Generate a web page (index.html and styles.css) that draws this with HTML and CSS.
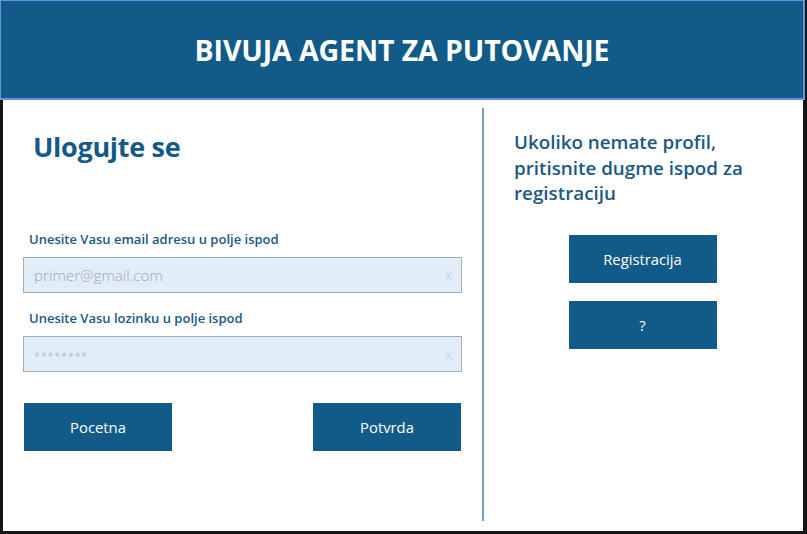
FILE: index.html
```html
<!DOCTYPE html>
<html lang="sr">
<head>
<meta charset="utf-8">
<title>Bivuja agent za putovanje</title>
<link rel="stylesheet" href="styles.css">
</head>
<body>
<header class="header">
  <h1 class="header-title">BIVUJA AGENT ZA PUTOVANJE</h1>
</header>
<main class="main">
  <section class="login">
    <h2 class="login-title">Ulogujte se</h2>
    <label class="field-label label-email">Unesite Vasu email adresu u polje ispod</label>
    <div class="field">
      <input class="field-input" type="text" placeholder="primer@gmail.com">
      <span class="field-clear">X</span>
    </div>
    <label class="field-label label-pass">Unesite Vasu lozinku u polje ispod</label>
    <div class="field">
      <input class="field-input field-pass" type="text" placeholder="********">
      <span class="field-clear">X</span>
    </div>
    <div class="actions">
      <button class="btn">Pocetna</button>
      <button class="btn">Potvrda</button>
    </div>
  </section>
  <div class="divider"></div>
  <section class="register">
    <p class="register-text">Ukoliko nemate profil, pritisnite dugme ispod za registraciju</p>
    <button class="btn btn-reg">Registracija</button>
    <button class="btn btn-help">?</button>
  </section>
</main>
</body>
</html>
```

FILE: styles.css
```css
* { box-sizing: border-box; }

html, body {
  margin: 0;
  padding: 0;
}

body {
  width: 807px;
  height: 534px;
  background: #151515;
  font-family: "Open Sans", "Noto Sans", sans-serif;
  overflow: hidden;
}

.header {
  width: 805px;
  height: 100px;
  background: #125a87;
  border-left: 1px solid #6692e6;
  border-top: 1px solid #6692e6;
  border-right: 2px solid #6692e6;
  border-bottom: 2px solid #6692e6;
  display: flex;
  align-items: center;
  justify-content: center;
}

.header-title {
  margin: 0;
  color: #ffffff;
  font-size: 28.5px;
  font-weight: 700;
  letter-spacing: -0.1px;
  line-height: 1;
  padding-top: 2px;
}

.main {
  margin-left: 3px;
  width: 800px;
  height: 431px;
  background: #ffffff;
  display: grid;
  grid-template-columns: 479px 2px 1fr;
}

.login {
  display: flex;
  flex-direction: column;
  align-items: flex-start;
  padding-left: 20px;
  padding-top: 30px;
}

.login-title {
  margin: 0 0 0 10px;
  color: #135a87;
  font-size: 27px;
  font-weight: 700;
  line-height: 34px;
  letter-spacing: -0.3px;
}

.field-label {
  margin-left: 6px;
  color: #1b5884;
  font-size: 13px;
  font-weight: 600;
  line-height: 18px;
}

.label-email { margin-top: 66px; margin-bottom: 9px; }
.label-pass { margin-top: 16px; margin-bottom: 9px; }

.field {
  width: 439px;
  height: 36px;
  background: #e1eef9;
  border: 1px solid #a6acb4;
  display: flex;
  align-items: center;
  padding: 0 9px 0 10px;
}

.field-input {
  flex: 1;
  border: none;
  background: transparent;
  outline: none;
  padding: 0;
  font-family: inherit;
  font-size: 15.2px;
  font-weight: 300;
  color: #555;
}

.field-input::placeholder {
  color: #a3a7ab;
  opacity: 1;
}

.field-pass::placeholder {
  font-size: 11px;
  letter-spacing: 0.7px;
}

.field-clear {
  color: #c3c8cd;
  font-size: 12px;
  font-weight: 300;
  padding-top: 2px;
}

.actions {
  margin-top: 31px;
  margin-left: 1px;
  width: 437px;
  display: flex;
  justify-content: space-between;
}

.btn {
  width: 148px;
  height: 48px;
  border: none;
  background: #125a87;
  color: #ffffff;
  font-family: inherit;
  font-size: 14.8px;
  font-weight: 400;
  padding: 0;
  cursor: pointer;
}

.divider {
  background: #73a1c5;
  margin: 8px 0 10px;
}

.register {
  display: flex;
  flex-direction: column;
  align-items: center;
  padding-top: 30px;
  padding-right: 2px;
}

.register-text {
  align-self: stretch;
  margin: 0;
  padding: 0 16px 0 30px;
  color: #1b5884;
  font-size: 18.8px;
  font-weight: 600;
  line-height: 25.5px;
}

.btn-reg { margin-top: 28px; }
.btn-help { margin-top: 18px; }
```
